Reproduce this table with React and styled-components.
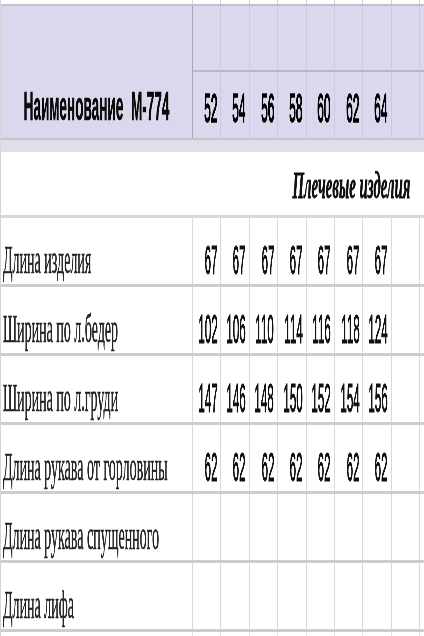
import React from "react";
import styled, { createGlobalStyle, css } from "styled-components";

const GlobalStyle = createGlobalStyle`
  html, body {
    margin: 0;
    padding: 0;
    background: #ffffff;
    overflow: hidden;
  }
`;

const COLS = "192px repeat(8, 28.4px) 1fr";

const sizes = ["52", "54", "56", "58", "60", "62", "64"];

const rows = [
  { name: "Длина изделия", values: ["67", "67", "67", "67", "67", "67", "67"] },
  { name: "Ширина по л.бедер", values: ["102", "106", "110", "114", "116", "118", "124"] },
  { name: "Ширина по л.груди", values: ["147", "146", "148", "150", "152", "154", "156"] },
  { name: "Длина рукава от горловины", values: ["62", "62", "62", "62", "62", "62", "62"] },
  { name: "Длина рукава спущенного", values: [] },
  { name: "Длина лифа", values: [] },
];

const Sheet = styled.div`
  width: 424px;
  height: 636px;
  overflow: hidden;
  border-left: 1px solid #d4d4d8;
  box-sizing: border-box;
`;

const GridRow = styled.div`
  display: grid;
  grid-template-columns: ${COLS};
  height: ${({ $h }) => $h}px;
  border-bottom: ${({ $line }) => $line || "none"};
`;

const Cell = styled.div`
  display: flex;
  align-items: flex-end;
  justify-content: ${({ $align }) => $align || "flex-end"};
  padding: 0 3px 4px 2px;
  border-right: 1px solid ${({ $line }) => $line || "#d9d9d9"};
  white-space: nowrap;
  min-width: 0;
`;

// the source sheet is squeezed sideways, so text is narrowed with scaleX
const Squeeze = styled.span`
  display: inline-block;
  line-height: 1;
  white-space: nowrap;
  transform: scaleX(${({ $k }) => $k}) translateZ(0);
  transform-origin: ${({ $origin }) => $origin || "right"} bottom;
  will-change: transform;
`;

const Label = styled(Squeeze)`
  font-family: "Liberation Serif", "Times New Roman", serif;
  font-size: 40px;
  color: #262626;
  -webkit-text-stroke: 0.6px #262626;
`;

const Num = styled(Squeeze)`
  font-family: "Liberation Sans", Arial, sans-serif;
  font-size: 40px;
  color: #111;
  -webkit-text-stroke: 1px #111;
`;

const HeadNum = styled(Num)`
  color: #000;
  -webkit-text-stroke: 1.6px #000;
`;

const HeadTitle = styled(Squeeze)`
  font-family: "Liberation Sans", Arial, sans-serif;
  font-weight: bold;
  font-size: 40px;
  color: #0a0a0a;
  -webkit-text-stroke: 0.6px #0a0a0a;
`;

const Section = styled(Squeeze)`
  font-family: "Liberation Serif", "Times New Roman", serif;
  font-style: italic;
  font-weight: bold;
  font-size: 38px;
  color: #111;
  -webkit-text-stroke: 0.8px #111;
`;

const Header = styled.div`
  display: grid;
  grid-template-columns: ${COLS};
  grid-template-rows: 66px 66px;
  background: #dcd7ec;
  border-bottom: 2px solid #c4c3d2;
`;

const HeadName = styled.div`
  grid-row: 1 / span 2;
  display: flex;
  align-items: flex-end;
  justify-content: center;
  padding-bottom: 12px;
  border-right: 1px solid #a9a7b6;
`;

const HeadCell = styled.div`
  display: flex;
  align-items: flex-end;
  justify-content: flex-end;
  padding: 0 3px 10px 0;
  border-right: 1px solid #cdc8dd;
  ${({ $top }) =>
    $top &&
    css`
      border-bottom: 2px solid #bab6cb;
    `}
`;

const HeadFill = styled.div`
  border-bottom: ${({ $top }) => ($top ? "2px solid #bab6cb" : "none")};
`;

const Band = styled.div`
  height: 12px;
  background: #dedfe8;
`;

const SectionRow = styled.div`
  display: flex;
  align-items: flex-end;
  justify-content: flex-end;
  height: 66px;
  padding: 0 14px 11px 0;
  box-sizing: border-box;
  border-bottom: 3px solid #d7d7d7;
`;

const emptyCols = Array.from({ length: 9 });

export default function App() {
  return (
    <>
      <GlobalStyle />
      <Sheet>
        <GridRow $h={4} $line="2px solid #c2c2ca">
          {emptyCols.map((_, i) => (
            <Cell key={i} $line="#d2d2d8" />
          ))}
          <div />
        </GridRow>

        <Header>
          <HeadName>
            <HeadTitle $k={0.34} $origin="center">
              Наименование&nbsp; М-774
            </HeadTitle>
          </HeadName>
          {Array.from({ length: 8 }).map((_, i) => (
            <HeadCell key={`t${i}`} $top />
          ))}
          <HeadFill $top />
          {sizes.map((s) => (
            <HeadCell key={s}>
              <HeadNum $k={0.3}>{s}</HeadNum>
            </HeadCell>
          ))}
          <HeadCell />
          <HeadFill />
        </Header>

        <Band />

        <SectionRow>
          <Section $k={0.39}>Плечевые изделия</Section>
        </SectionRow>

        {rows.map((row) => (
          <GridRow key={row.name} $h={66} $line="3px solid #cdcdcd">
            <Cell $align="flex-start">
              <Label $k={0.35} $origin="left">
                {row.name}
              </Label>
            </Cell>
            {Array.from({ length: 8 }).map((_, i) => (
              <Cell key={i}>
                {row.values[i] && <Num $k={0.29}>{row.values[i]}</Num>}
              </Cell>
            ))}
            <div />
          </GridRow>
        ))}

        <GridRow $h={30}>
          {emptyCols.map((_, i) => (
            <Cell key={i} $line="#e2e2e2" />
          ))}
          <div />
        </GridRow>
      </Sheet>
    </>
  );
}
